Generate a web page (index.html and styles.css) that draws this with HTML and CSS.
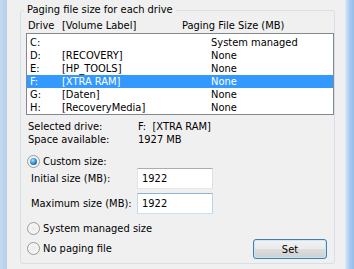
FILE: index.html
```html
<!DOCTYPE html>
<html>
<head>
<meta charset="utf-8">
<link rel="stylesheet" href="styles.css">
</head>
<body>
<div class="window">
  <div class="frame-left"></div>
  <div class="content">
    <fieldset class="group">
      <legend class="group-title">Paging file size for each drive</legend>
      <div class="list-head">
        <span>Drive</span><span>[Volume Label]</span><span>Paging File Size (MB)</span>
      </div>
      <div class="listbox">
        <div class="row"><span>C:</span><span></span><span>System managed</span></div>
        <div class="row"><span>D:</span><span>[RECOVERY]</span><span>None</span></div>
        <div class="row"><span>E:</span><span>[HP_TOOLS]</span><span>None</span></div>
        <div class="row selected"><span>F:</span><span>[XTRA RAM]</span><span>None</span></div>
        <div class="row"><span>G:</span><span>[Daten]</span><span>None</span></div>
        <div class="row"><span>H:</span><span>[RecoveryMedia]</span><span>None</span></div>
      </div>
      <div class="info">
        <span>Selected drive:</span><span>F:&nbsp; [XTRA RAM]</span>
        <span>Space available:</span><span>1927 MB</span>
      </div>
      <div class="radio-line first">
        <span class="radio checked"></span><span>Custom size:</span>
      </div>
      <div class="field">
        <span class="field-label">Initial size (MB):</span>
        <input class="textbox" type="text" value="1922" readonly>
      </div>
      <div class="field second">
        <span class="field-label">Maximum size (MB):</span>
        <input class="textbox focus" type="text" value="1922" readonly>
      </div>
      <div class="bottom">
        <div class="radios">
          <div class="radio-line"><span class="radio"></span><span>System managed size</span></div>
          <div class="radio-line gap"><span class="radio"></span><span>No paging file</span></div>
        </div>
        <button class="btn" type="button">Set</button>
      </div>
    </fieldset>
  </div>
  <div class="frame-right"></div>
</div>
</body>
</html>
```

FILE: styles.css
```css
* { box-sizing: border-box; }
html, body {
  margin: 0;
  padding: 0;
  width: 354px;
  height: 269px;
  overflow: hidden;
  background: #f0f0f0;
}
body {
  font-family: "DejaVu Sans Condensed", "DejaVu Sans", sans-serif;
  font-stretch: condensed;
  font-size: 11px;
  color: #000;
}
.window {
  display: flex;
  height: 269px;
}
.frame-left {
  width: 7px;
  flex: none;
  background: linear-gradient(to right, #c4d9ef, #b7cfea);
}
.frame-right {
  width: 9px;
  flex: none;
  border-left: 1px solid #dde9f6;
  background: linear-gradient(to right, #cfe2f6, #a9cbef 45%, #94bde9);
}
.content {
  flex: 1;
  padding: 3px 0 0 13px;
}
.group {
  width: 315px;
  margin: 0;
  padding: 0 0 4px 0;
  min-width: 0;
  border: 1px solid #d5dfe5;
  border-radius: 3px;
}
.group-title {
  margin-left: 3px;
  padding: 0 3px;
  line-height: 14px;
}
.list-head {
  display: grid;
  grid-template-columns: 34px 120px auto;
  margin: 2px 0 0 7px;
  line-height: 13px;
  white-space: nowrap;
}
.listbox {
  width: 308px;
  margin: 1px 0 0 5px;
  padding: 2px 0 0 0;
  border: 1px solid #828790;
  background: #fff;
}
.row {
  display: grid;
  grid-template-columns: 32px 149px auto;
  padding-left: 3px;
  height: 13px;
  line-height: 13px;
  white-space: nowrap;
}
.row.selected {
  background: #3399ff;
  color: #fff;
}
.info {
  display: grid;
  grid-template-columns: 110px auto;
  margin: 5px 0 0 7px;
  line-height: 13px;
  white-space: nowrap;
}
.radio-line {
  display: flex;
  align-items: center;
  gap: 2px;
  height: 13px;
  line-height: 13px;
  margin-left: 6px;
}
.radio-line.first { margin-top: 9px; }
.radio-line.gap { margin-top: 7px; }
.radio {
  width: 13px;
  height: 13px;
  border-radius: 50%;
  border: 1px solid #9a9a9a;
  background: radial-gradient(circle at 50% 50%, #e9e9e9 0%, #f4f4f4 45%, #dcdcdc 100%);
  box-shadow: inset 0 0 0 1px #f7f7f7;
  position: relative;
  flex: none;
  margin-right: 1px;
}
.radio.checked::after {
  content: "";
  position: absolute;
  left: 2px;
  top: 2px;
  width: 7px;
  height: 7px;
  border-radius: 50%;
  background: radial-gradient(circle at 40% 35%, #b5e6ff 0%, #4aa8e8 35%, #1a5fa8 75%, #173f73 100%);
}
.field {
  display: grid;
  grid-template-columns: 106px 76px;
  align-items: center;
  margin-left: 10px;
  height: 21px;
  white-space: nowrap;
}
.field.second { margin-top: 4px; }
.textbox {
  width: 76px;
  height: 21px;
  margin: 0;
  padding: 0 0 0 4px;
  font: inherit;
  color: #000;
  background: #fff;
  border: 1px solid;
  border-color: #abadb3 #dbdfe6 #e3e9ef #e2e3ea;
  outline: none;
}
.textbox.focus {
  border-color: #8fb4d6 #b7d5ea #c7e2f1 #c5daed;
}
.bottom {
  display: flex;
  justify-content: space-between;
}
.radios {
  padding: 8px 0 4px 0;
}
.btn {
  align-self: flex-end;
  width: 74px;
  height: 20px;
  margin: 0 7px 0 0;
  padding: 0;
  font: inherit;
  color: #000;
  border: 1px solid #3c7fb1;
  border-radius: 3px;
  background: linear-gradient(#f2f2f2 0%, #ebebeb 50%, #dddddd 51%, #cfcfcf 100%);
  box-shadow: inset 0 0 0 1px rgba(196, 232, 252, 0.9);
}
```
